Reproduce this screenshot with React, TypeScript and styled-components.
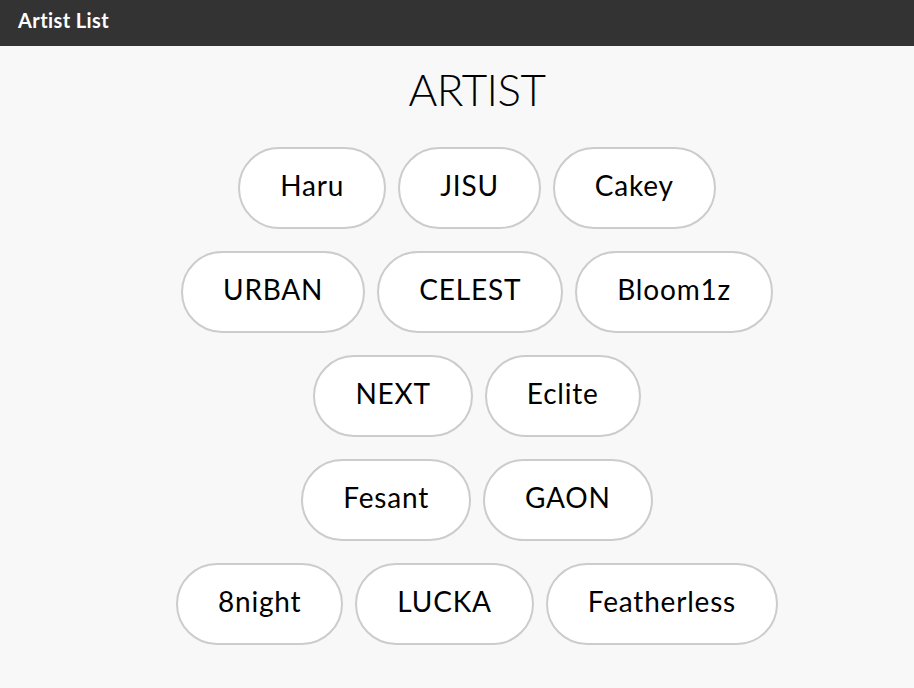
import styled, { createGlobalStyle } from "styled-components";

const rows: string[][] = [
  ["Haru", "JISU", "Cakey"],
  ["URBAN", "CELEST", "Bloom1z"],
  ["NEXT", "Eclite"],
  ["Fesant", "GAON"],
  ["8night", "LUCKA", "Featherless"],
];

const App: React.FC = () => {
  return (
    <>
      <GlobalStyle />
      <Styled_App_Header>Artist List</Styled_App_Header>
      <Styled_App_Main>
        <Styled_App_Title>ARTIST</Styled_App_Title>
        <Styled_App_List>
          {rows.map((row, i) => (
            <Styled_App_Row key={i}>
              {row.map((name) => (
                <Styled_App_ArtistButton key={name}>{name}</Styled_App_ArtistButton>
              ))}
            </Styled_App_Row>
          ))}
        </Styled_App_List>
      </Styled_App_Main>
    </>
  );
};

export default App;

const GlobalStyle = createGlobalStyle`
  html, body {
    margin: 0;
    padding: 0;
    background: #f8f8f8;
    font-family: Lato, "Noto Sans", sans-serif;
  }
`;

const Styled_App_Header = styled.header`
  height: 46px;
  background: #333333;
  color: #ffffff;
  font-size: 20px;
  font-weight: 700;
  line-height: 40px;
  padding-left: 18px;
  letter-spacing: 0.4px;
  box-sizing: border-box;
`;

const Styled_App_Main = styled.main`
  display: flex;
  flex-direction: column;
  align-items: center;
  padding: 21px 0 40px 40px;
`;

const Styled_App_Title = styled.h1`
  margin: 0;
  font-size: 44px;
  font-weight: 300;
  line-height: 44px;
  letter-spacing: -0.5px;
  color: #000000;
`;

const Styled_App_List = styled.div`
  display: flex;
  flex-direction: column;
  align-items: center;
  gap: 22px;
  margin-top: 36px;
`;

const Styled_App_Row = styled.div`
  display: flex;
  gap: 12px;
`;

const Styled_App_ArtistButton = styled.button`
  height: 82px;
  padding: 0 40px 6px;
  border: 2px solid #cccccc;
  border-radius: 41px;
  background: #ffffff;
  color: #000000;
  font-family: Lato, "Noto Sans", sans-serif;
  font-size: 28px;
  font-weight: 400;
  letter-spacing: 0.8px;
  cursor: pointer;
`;
